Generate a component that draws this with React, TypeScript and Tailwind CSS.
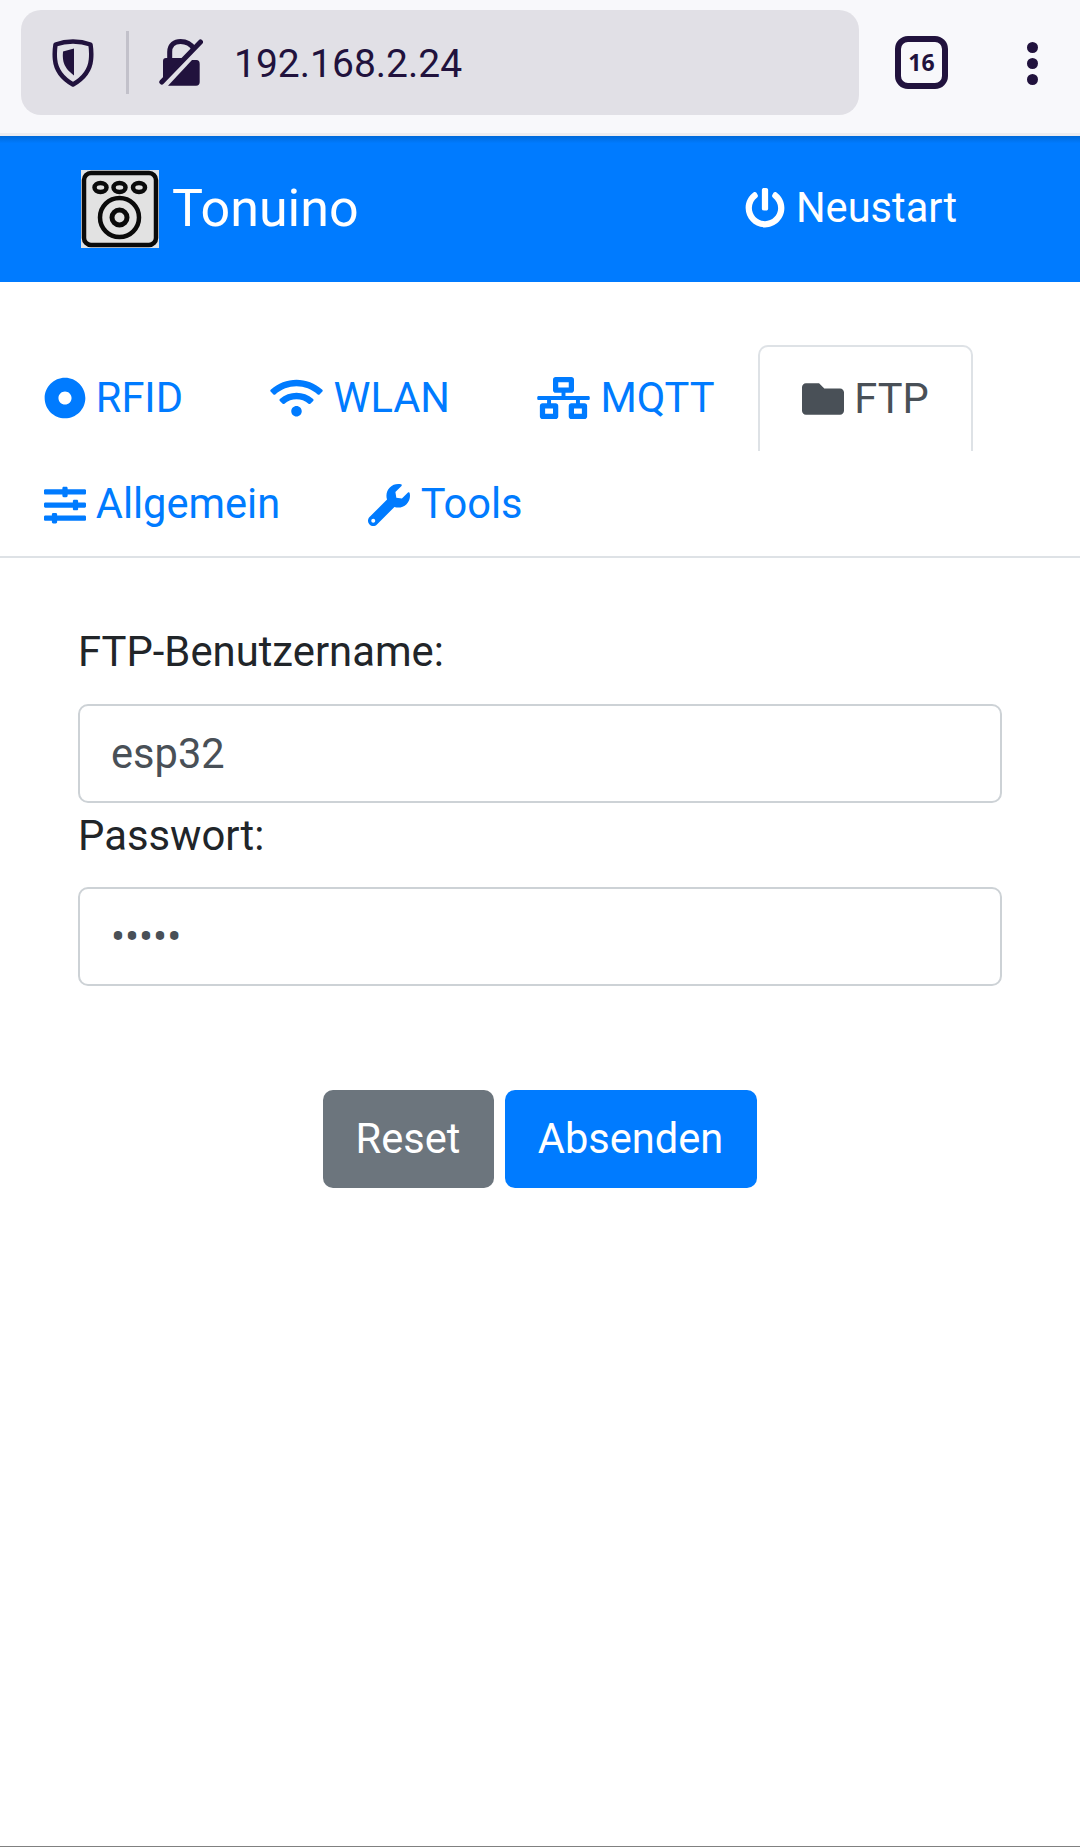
import React from 'react';
import { FaDotCircle, FaWifi, FaNetworkWired, FaFolder, FaSlidersH, FaWrench, FaPowerOff } from 'react-icons/fa';

function ShieldIcon() {
  return (
    <svg width="42" height="48" viewBox="0 0 42 48" fill="none">
      <path d="M21 2.500c6 0 12 1 17.500 3 .8 5 1 10 .5 15-1 11-7.500 19-18 25-10.500-6-17-14-18-25-.5-5-.3-10 .5-15 5.500-2 11.500-3 17.500-3z" stroke="#21123d" strokeWidth="4.500" strokeLinejoin="round" />
      <path d="M22 9.500 11 12.500c-.3 3.500-.2 6.500.3 9.500 1.200 5.500 4.700 10 10.700 14.500z" fill="#21123d" />
    </svg>
  );
}

function LockOffIcon() {
  return (
    <svg width="44" height="47" viewBox="0 0 44 47" fill="none">
      <path d="M10.700 20V13C10.700 5.500 16 2.500 21.500 2.500 27 2.500 32 5 35 10" stroke="#21123d" strokeWidth="5" />
      <path d="M7 19H27L4 41V22Q4 19 7 19z" fill="#21123d" />
      <path d="M33 21H37.500Q40.700 21 40.700 25V43Q40.700 46.700 37 46.700H9z" fill="#21123d" />
      <path d="M2.800 43 41.500 3" stroke="#21123d" strokeWidth="5" strokeLinecap="round" />
    </svg>
  );
}

function TonuinoLogo() {
  return (
    <svg width="78" height="78" viewBox="0 0 78 78" className="shrink-0">
      <rect width="78" height="78" fill="#dfe3e8" />
      <rect x="3" y="3" width="72" height="72" rx="7" fill="#e2e2e2" stroke="#0a0a0a" strokeWidth="4.500" />
      <ellipse cx="19.500" cy="17.500" rx="6" ry="4.500" fill="#e2e2e2" stroke="#0a0a0a" strokeWidth="4.500" />
      <ellipse cx="38.500" cy="17.500" rx="6" ry="4.500" fill="#e2e2e2" stroke="#0a0a0a" strokeWidth="4.500" />
      <ellipse cx="58" cy="17.500" rx="6" ry="4.500" fill="#e2e2e2" stroke="#0a0a0a" strokeWidth="4.500" />
      <circle cx="38.500" cy="47.500" r="19.500" fill="#e2e2e2" stroke="#0a0a0a" strokeWidth="4.500" />
      <circle cx="38.500" cy="47.500" r="7.500" fill="#e2e2e2" stroke="#0a0a0a" strokeWidth="5" />
    </svg>
  );
}

export default function App() {
  return (
    <div className="relative h-[1847px] bg-white font-['Roboto',sans-serif] text-[41.600px] text-[#212529] border-b border-[#808080]">
      {/* browser chrome */}
      <div className="h-[136px] bg-[#f8f8fb] border-b-[3px] border-[#ececf0] pt-[10px] pl-[21px] flex items-start">
        <div className="w-[838px] h-[105px] rounded-[20px] bg-[#e1e0e6] flex items-center pl-[31px] text-[#21123d]">
          <ShieldIcon />
          <div className="w-[3px] h-[63px] bg-[#c2c1ca] ml-[32px] mr-[30px]"></div>
          <LockOffIcon />
          <span className="ml-[31px] pt-[3px] text-[39px]">192.168.2.24</span>
        </div>
        <div className="ml-[36px] mt-[26px] w-[53px] h-[53px] rounded-[13px] border-[6px] border-[#21123d] flex items-center justify-center text-[23px] font-bold text-[#21123d] font-['Open_Sans',sans-serif]">
          16
        </div>
        <div className="ml-[79px] mt-[32px] flex flex-col gap-[5px]">
          <div className="w-[11px] h-[11px] rounded-full bg-[#21123d]"></div>
          <div className="w-[11px] h-[11px] rounded-full bg-[#21123d]"></div>
          <div className="w-[11px] h-[11px] rounded-full bg-[#21123d]"></div>
        </div>
      </div>

      {/* navbar */}
      <nav className="h-[146px] text-white flex items-center pl-[81px] bg-gradient-to-b from-[#0069d9] to-[#007bff] to-[5%]">
        <TonuinoLogo />
        <span className="ml-[13px] text-[52px] leading-none">Tonuino</span>
        <a className="ml-auto mr-[123px] pb-[1px] flex items-center">
          <FaPowerOff className="w-[40px] h-[40px] mr-[11px]" />
          Neustart
        </a>
      </nav>

      {/* tabs */}
      <div className="mt-[63px] h-[213px] border-b-2 border-[#dee2e6] text-[#007bff]">
        <div className="flex h-[106px]">
          <a className="flex items-center px-[43.750px]"><FaDotCircle className="w-[42px] h-[42px] mr-[10px]" />RFID</a>
          <a className="flex items-center px-[43.750px]"><FaWifi className="w-[53px] h-[42px] mr-[10px]" />WLAN</a>
          <a className="flex items-center px-[43.750px]"><FaNetworkWired className="w-[53px] h-[42px] mr-[10px]" />MQTT</a>
          <a className="flex items-center px-[42px] border-2 border-b-0 border-[#dee2e6] rounded-t-[10px] text-[#495057]"><FaFolder className="w-[42px] h-[42px] mr-[10px]" />FTP</a>
        </div>
        <div className="flex h-[105px] pt-[2px]">
          <a className="flex items-center px-[43.750px]"><FaSlidersH className="w-[42px] h-[42px] mr-[10px]" />Allgemein</a>
          <a className="flex items-center px-[43.750px]"><FaWrench className="w-[42px] h-[42px] mr-[11px]" />Tools</a>
        </div>
      </div>

      {/* form */}
      <form className="px-[78px] pt-[64px]">
        <label className="block h-[60px] leading-[60px] text-[41.800px]">FTP-Benutzername:</label>
        <input readOnly value="esp32" className="mt-[22px] block w-full h-[99px] px-[31px] border-2 border-[#cdd2d6] rounded-[10px] text-[#495057] outline-none" />
        <label className="block h-[60px] leading-[60px] mt-[3px] text-[41.800px]">Passwort:</label>
        <input readOnly type="password" value="esp32" className="mt-[21px] block w-full h-[99px] px-[31px] border-2 border-[#cdd2d6] rounded-[10px] text-[#495057] outline-none" />
        <div className="mt-[104px] flex justify-center gap-[11px] pr-[1px]">
          <button type="button" className="w-[171px] h-[98px] rounded-[10px] bg-[#6c757d] text-white">Reset</button>
          <button type="button" className="w-[252px] h-[98px] rounded-[10px] bg-[#007bff] text-white">Absenden</button>
        </div>
      </form>
    </div>
  );
}
